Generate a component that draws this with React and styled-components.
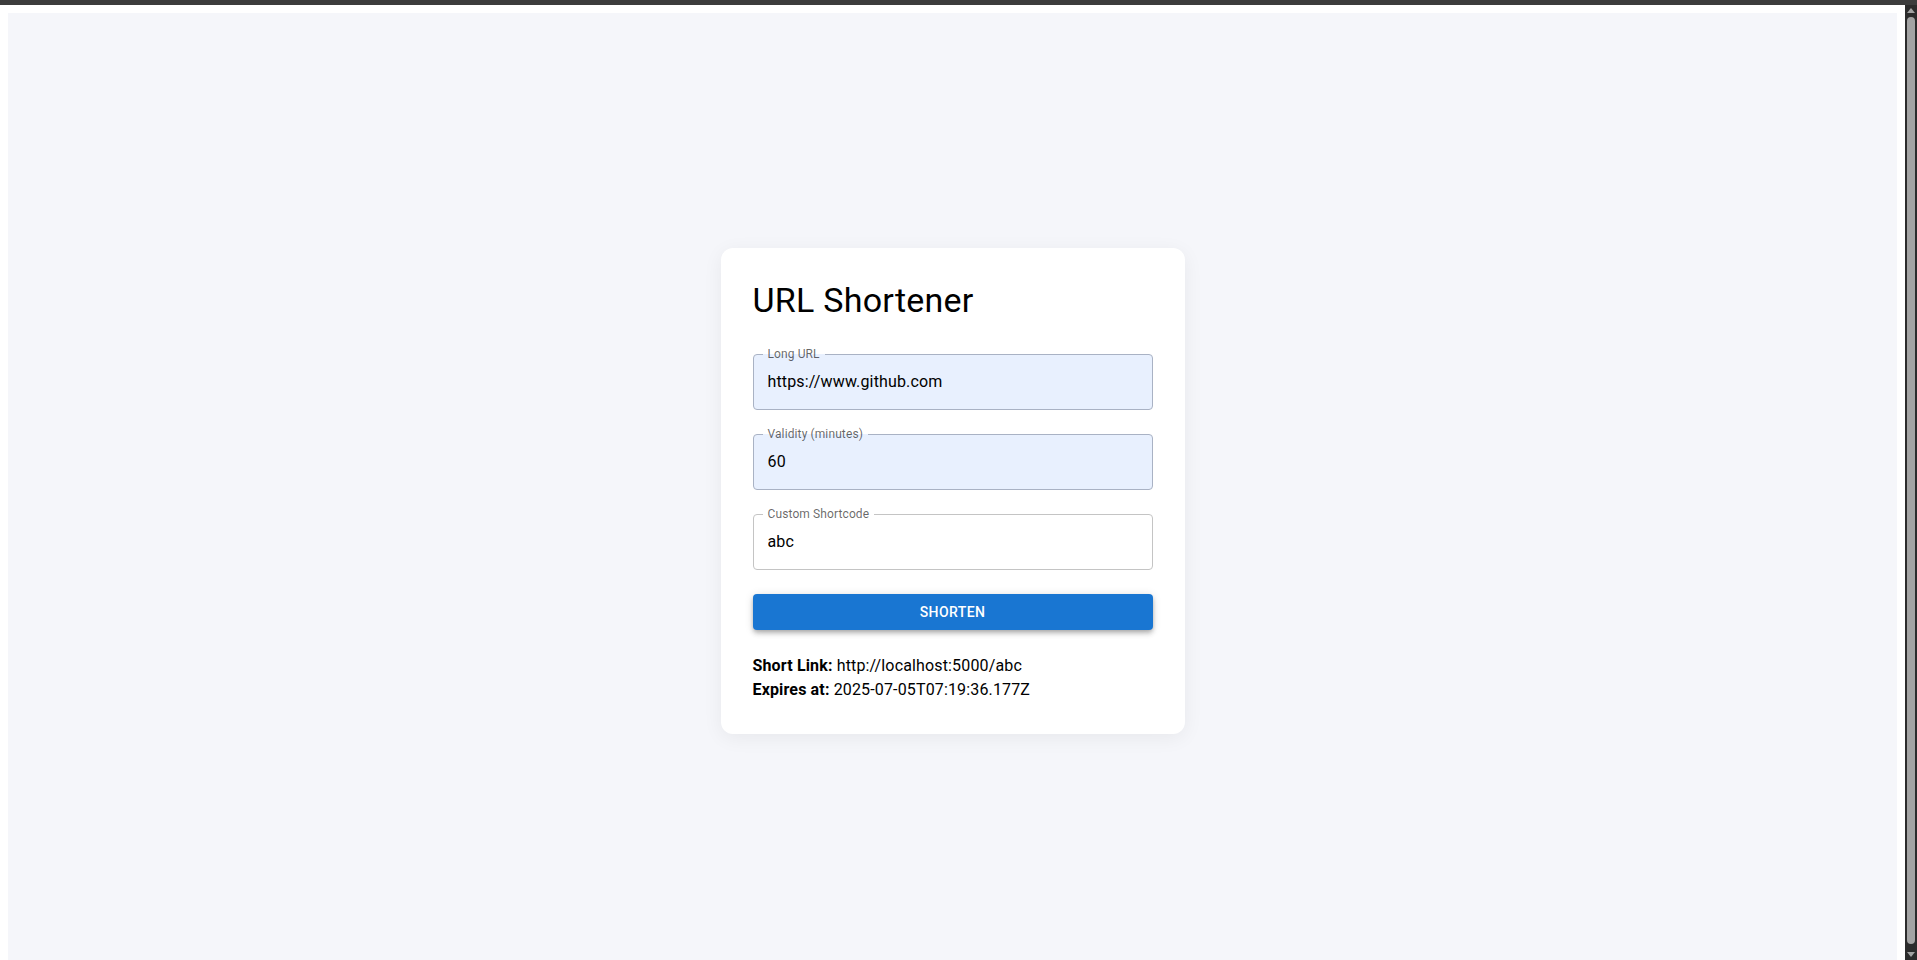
import styled, { createGlobalStyle } from "styled-components";

const GlobalStyle = createGlobalStyle`
	html {
		background: #ffffff;
	}
	body {
		margin: 0;
		font-family: Roboto, "Liberation Sans", sans-serif;
		color: rgba(0, 0, 0, 0.87);
	}
`;

const TopBar = styled.div`
	height: 5px;
	background: #3c3c3c;
`;

const Frame = styled.div`
	display: flex;
	align-items: stretch;
`;

const Page = styled.main`
	flex: 1;
	margin: 8px;
	min-height: 100vh;
	padding-bottom: 5px;
	box-sizing: border-box;
	background: #f5f6fa;
	display: flex;
	align-items: center;
	justify-content: center;
`;

const ScrollTrack = styled.div`
	width: 12px;
	height: calc(100vh - 5px);
	background: #2b2b2b;
	display: flex;
	flex-direction: column;
	align-items: center;
	padding: 3px 0;
	box-sizing: border-box;
	gap: 4px;
`;

const Arrow = styled.div`
	width: 0;
	height: 0;
	border-left: 4px solid transparent;
	border-right: 4px solid transparent;
	${(p) => (p.$down ? "border-top: 5px solid #a3a3a3;" : "border-bottom: 5px solid #a3a3a3;")}
`;

const Thumb = styled.div`
	flex: 1;
	width: 8px;
	border-radius: 4px;
	background: #a3a3a3;
	margin-bottom: 4px;
`;

const Card = styled.section`
	width: 400px;
	padding: 32px;
	background: #ffffff;
	border-radius: 12px;
	box-shadow: 0 4px 20px rgba(0, 0, 0, 0.06);
`;

const Title = styled.h1`
	margin: 0 0 18px;
	font-size: 34px;
	font-weight: 400;
	line-height: 40px;
	letter-spacing: 0.00735em;
	color: #000;
`;

const Form = styled.form`
	display: flex;
	flex-direction: column;
	gap: 24px;
	padding-top: 16px;
`;

const Field = styled.div`
	position: relative;
	height: 56px;
	box-sizing: border-box;
	border: 1px solid ${(p) => (p.$filled ? "#a9b2c4" : "#c4c4c4")};
	border-radius: 4px;
	background: ${(p) => (p.$filled ? "#e8f0fe" : "#ffffff")};
`;

const Label = styled.label`
	position: absolute;
	top: -8px;
	left: 9px;
	padding: 0 5px;
	font-size: 12px;
	line-height: 14px;
	letter-spacing: 0.00938em;
	color: rgba(0, 0, 0, 0.6);
	background: linear-gradient(
		to bottom,
		#ffffff 0 7px,
		${(p) => (p.$filled ? "#e8f0fe" : "#ffffff")} 7px 9px,
		transparent 9px
	);
`;

const Input = styled.input`
	box-sizing: border-box;
	width: 100%;
	height: 100%;
	border: none;
	outline: none;
	background: transparent;
	padding: 0 14px;
	font-family: Roboto, "Liberation Sans", sans-serif;
	font-size: 16px;
	letter-spacing: 0.00938em;
	color: #000;
`;

const Button = styled.button`
	height: 36px;
	border: none;
	border-radius: 4px;
	background: #1976d2;
	color: #fff;
	font-family: Roboto, "Liberation Sans", sans-serif;
	font-size: 14px;
	font-weight: 500;
	letter-spacing: 0.02857em;
	text-transform: uppercase;
	box-shadow: 0 2px 4px -1px rgba(0, 0, 0, 0.2), 0 4px 5px 0 rgba(0, 0, 0, 0.14), 0 1px 10px 0 rgba(0, 0, 0, 0.12);
	cursor: pointer;
`;

const Result = styled.div`
	margin-top: 24px;
	font-size: 16px;
	line-height: 24px;
	letter-spacing: 0.00938em;
	color: #000;
	& b {
		font-weight: 700;
	}
`;

const fields = [
	{ id: "url", label: "Long URL", value: "https://www.github.com", filled: true },
	{ id: "validity", label: "Validity (minutes)", value: "60", filled: true },
	{ id: "code", label: "Custom Shortcode", value: "abc", filled: false },
];

export default function App() {
	return (
		<>
			<GlobalStyle />
			<TopBar />
			<Frame>
				<Page>
					<Card>
						<Title>URL Shortener</Title>
						<Form onSubmit={(e) => e.preventDefault()}>
							{fields.map((f) => (
								<Field key={f.id} $filled={f.filled}>
									<Label htmlFor={f.id} $filled={f.filled}>{f.label}</Label>
									<Input id={f.id} defaultValue={f.value} />
								</Field>
							))}
							<Button type="submit">Shorten</Button>
						</Form>
						<Result>
							<div><b>Short Link:</b> http://localhost:5000/abc</div>
							<div><b>Expires at:</b> 2025-07-05T07:19:36.177Z</div>
						</Result>
					</Card>
				</Page>
				<ScrollTrack>
					<Arrow />
					<Thumb />
					<Arrow $down />
				</ScrollTrack>
			</Frame>
		</>
	);
}
